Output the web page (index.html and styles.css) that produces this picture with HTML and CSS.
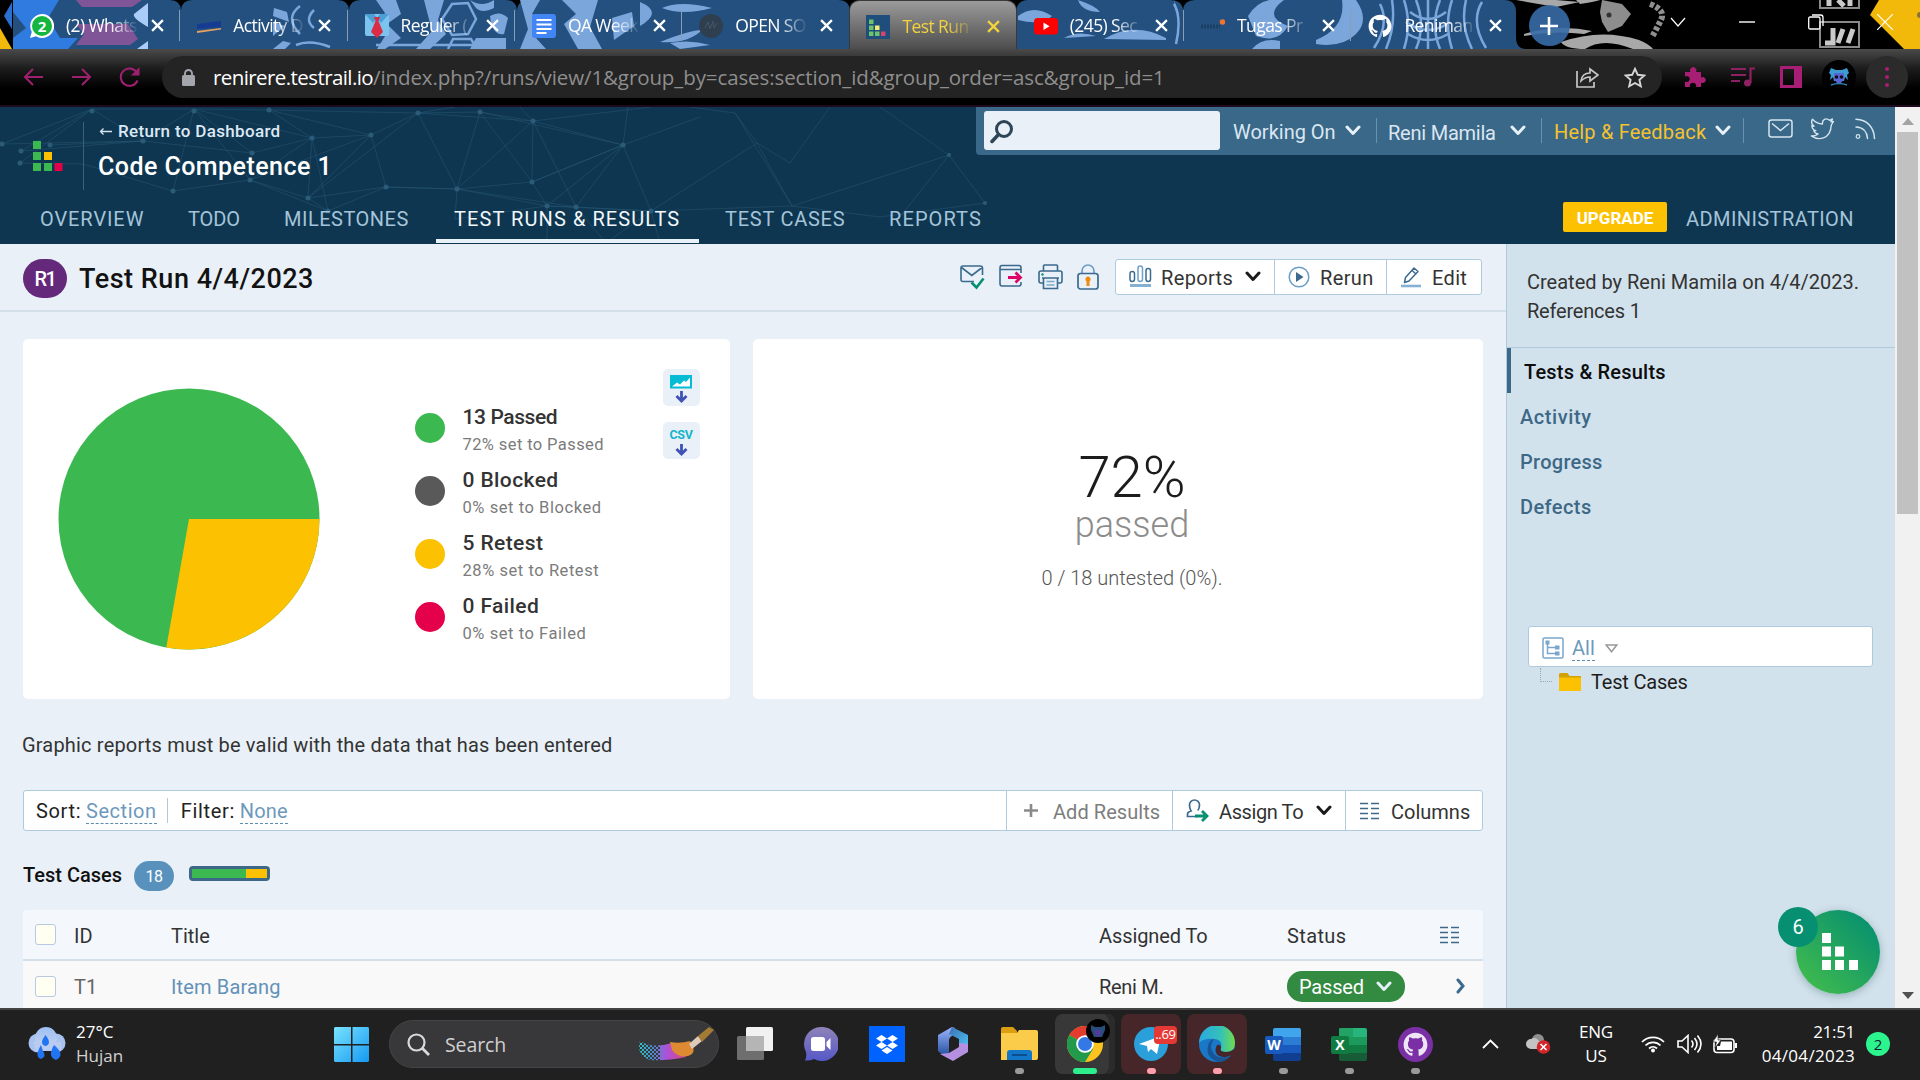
FILE: index.html
```
<!DOCTYPE html>
<html lang="en">
<head>
<meta charset="utf-8">
<title>Test Run 4/4/2023 - TestRail</title>
<link rel="stylesheet" href="styles.css">
</head>
<body>
<svg class="defs" width="0" height="0" aria-hidden="true">
  <symbol id="x" viewBox="0 0 12 12"><path d="M1 1l10 10M11 1L1 11" fill="none" stroke="currentColor" stroke-width="2.1"/></symbol>
  <symbol id="chev" viewBox="0 0 16 11"><path d="M2 2l6 6.5L14 2" fill="none" stroke="currentColor" stroke-width="3" stroke-linecap="round" stroke-linejoin="round"/></symbol>
  <symbol id="cols" viewBox="0 0 20 18"><path d="M0 1.500h8M11 1.500h8M0 6.500h8M11 6.500h8M0 11.500h8M11 11.500h8M0 16.500h8M11 16.500h8" fill="none" stroke="#3d6887" stroke-width="1.700"/></symbol>
  <symbol id="octo" viewBox="0 0 24 24"><path d="M12 .8C5.600.8.6 5.900.6 12.200c0 5 3.200 9.200 7.700 10.700.6.1.8-.2.8-.6v-2.300c-3.200.7-3.800-1.300-3.800-1.300-.5-1.300-1.300-1.700-1.300-1.700-1-.7.1-.7.1-.7 1.200.1 1.800 1.200 1.800 1.200 1 1.700 2.700 1.200 3.300 1 .1-.8.4-1.300.7-1.600-2.500-.3-5.200-1.300-5.200-5.600 0-1.300.4-2.300 1.200-3.100-.1-.3-.5-1.500.1-3.100 0 0 1-.3 3.200 1.200a11 11 0 0 1 5.700 0c2.200-1.500 3.200-1.200 3.200-1.200.6 1.600.2 2.800.1 3.100.7.8 1.200 1.800 1.200 3.100 0 4.400-2.700 5.300-5.200 5.600.4.400.8 1.100.8 2.200v3.200c0 .4.2.7.8.6 4.500-1.500 7.600-5.800 7.600-10.700C23.400 5.900 18.400.8 12 .8z" fill="currentColor"/></symbol>
</svg>
<div class="desktop">

<div class="tabstrip">
  <svg class="art" width="1920" height="49" viewBox="0 0 1920 49">
    <rect width="1920" height="49" fill="#000"/>
    <path d="M0 28L12 49H0z" fill="#f2b90a"/><path d="M4 16L12 2v27z" fill="#2d6fd0"/>
    <path d="M13 49V0H170q10 0 11 10q1-10 11-10H338q10 0 11 10q1-10 11-10H506q10 0 11 10q1-10 11-10H838q12 0 12 12v37zM1016 49V14q0-14 12-14H1170q12 0 13 10q1-10 12-10H1504q12 0 12 12v25q0 12 10 12z" fill="#24507f"/>
    <path d="M13 0H59L48 18 60 38H78L68 49H13V38L26 28 13 12z" fill="#2f7be0"/>
    <path d="M76 0H142L132 7H82zM76 24H128L138 39 130 45H76L84 34z" fill="#7f5597"/>
    <path d="M148 3V27Q132 18 134 14zM137 49L148 41V49z" fill="#a9cdf8"/>
    <g fill="#7ba6dc" stroke="none">
      <path d="M274 8l13 4 2 10-16-6zM273 49l10-8 8 2-6 6zM273 22l12 4-12 10zM376 0h20l5 14-14 10 14 14-16 11h-8l10-16-8-10 6-10zM424 0h20l-6 20 8 14-16 15h-14l16-18zM520 0h20l-8 14 14 8-10 16 10 11h-26l8-20zM562 0l14 14-12 10 14 25h24l-12-22 8-27zM612 18l20-6 2 14-20 14zM640 2q24 10 0 24zM662 8q18-8 50 0q-30 8-50 0zM660 42q30-12 42-12q-14 14-42 12zM670 43q20-4 40 2l-30 4z"/>
      <path d="M470 0q12 8 24 0v8q-12 6-18 0zM490 16q10-6 18 2l-4 16q-12 2-14-18zM476 38h30v11h-36z"/>
      <path d="M1018 16q16-12 34 0q-10 10-34 4zM1078 0q18 6 22 12q-18 0-22-12zM1064 38q14-8 32-2zM1104 39q30-18 62-1v2zM1174 0q8 20 2 12zM1248 16q12-20 36-16q-22 16 4 26q-10 18-32 10zM1252 49q10-12 28-8v8zM1316 40q30-12 26-40h14q14 20 0 34t-40 10z"/>
    </g>
    <g fill="none" stroke="#7ba6dc" stroke-width="2.500">
      <path d="M300 6q-16 12 0 28M314 10q-10 10 0 18M452 4l-10 15 10 16 16-1 8-15-8-16zM448 49l5-10h18l6 10M376 45h118M296 45q14-6 34 2"/>
      <path d="M1174 4q8 14 2 40M1392 0q4 25-6 49M1404 0q8 24 0 49M1416 0q10 25 0 49M1428 0v49M1440 0q-10 25 0 49M1452 0q-8 24 0 49M1466 0q-6 25 6 49M1380 4q10 20-6 44M1482 2q-12 20 4 46M1410 12q18 14 36 0M1406 22q22 16 44 0M1408 34q20 12 40 0"/>
    </g>
    <path d="M1516 0h40l24 2-24 5zM1580 4q14-2 20-4h-24zM1561 42q40-14 78-2q10 4 14 9h-20q-30-12-48 0q-20 0-24-7zM1524 34q34-10 68-3l-8 3q-30-4-60 2z" fill="#a8a8a8"/>
    <path d="M1600 12l2-12 20 4 9 10-9 12-14 6-6-10z" fill="#8d8d8d"/><circle cx="1609" cy="15" r="2.500" fill="#333"/>
    <path d="M1650 4q16 6 11 16t-9 17" fill="none" stroke="#909090" stroke-width="6" stroke-dasharray="4 2"/>
    <g fill="none" stroke="#8a8a8a" stroke-width="2"><path d="M1820-4v12h39V-4M1820 22h39v25h-39z"/><path d="M1825 43h8V28M1838 43l5-14M1848 43l5-14M1829 6V0M1838 0l6 6M1850 6V0" stroke="#c9c9c9" stroke-width="5"/></g>
    <path d="M1870 15L1879 0h41v49h-16z" fill="#f2b90a"/><circle cx="1920" cy="15" r="3" fill="#8a7330"/>
  </svg>
  <div class="tabs">
    <div class="tab"><svg class="fav" width="24" height="24" viewBox="0 0 24 24"><path d="M12 0a12 12 0 1 1-6 22.300L0 24l1.800-6A12 12 0 0 1 12 0z" fill="#fff"/><circle cx="12" cy="12" r="10" fill="#15b63f"/><text x="12" y="17.500" text-anchor="middle" class="wa">2</text></svg><span class="tt">(2) Whats</span><svg class="cl"><use href="#x"/></svg></div>
    <div class="tab"><svg class="fav" width="24" height="24" viewBox="0 0 24 24"><path d="M0 10l24-3v6L0 15z" fill="#153c92"/><path d="M0 17l24-3v1.500L0 19z" fill="#e5a15f"/></svg><span class="tt">Activity D</span><svg class="cl"><use href="#x"/></svg></div>
    <div class="tab"><svg class="fav" width="24" height="24" viewBox="0 0 24 24"><rect width="24" height="22" rx="2" fill="#7cc4f0"/><path d="M0 0h9l3 4-4 5zM24 0h-9l-3 4 4 5z" fill="#4a9fd6"/><path d="M9 3h6l-1.500 4L18 18l-6 6-6-6 4.500-11z" fill="#dc2b45"/></svg><span class="tt">Reguler (</span><svg class="cl"><use href="#x"/></svg></div>
    <div class="tab"><svg class="fav" width="24" height="24" viewBox="0 0 24 24"><rect width="24" height="24" rx="3" fill="#4285f4"/><path d="M4.500 6h15M4.500 10.500h15M4.500 15h15M4.500 19h10" stroke="#fff" stroke-width="2.200"/></svg><span class="tt">QA Week</span><svg class="cl"><use href="#x"/></svg></div>
    <div class="tab"><svg class="fav" width="24" height="24" viewBox="0 0 24 24"><circle cx="12" cy="12" r="12" fill="#2f3f4f"/><path d="M6 14l3-6 2 7 3-8 1 7 3-5" fill="none" stroke="#46566a"/></svg><span class="tt">OPEN SO</span><svg class="cl"><use href="#x"/></svg></div>
    <div class="tab active"><svg class="fav" width="24" height="24" viewBox="0 0 24 24"><rect width="24" height="24" fill="#1f4d7c"/><path d="M3 4.500h4.500V9H3zM3 10.500h4.500V15H3zM3 16.500h4.500V21H3zM9 16.500h4.500V21H9z" fill="#6cc46b"/><path d="M9 10.500h4.500V15H9z" fill="#f0ec74"/><path d="M15 16.500h4.500V21H15z" fill="#d6456b"/></svg><span class="tt">Test Run</span><svg class="cl"><use href="#x"/></svg></div>
    <div class="tab"><svg class="fav" width="24" height="24" viewBox="0 0 24 24"><rect y="4" width="24" height="16.500" rx="3.500" fill="#f00"/><path d="M9.500 8.500v7.500l6-3.700z" fill="#fff"/></svg><span class="tt">(245) Sec</span><svg class="cl"><use href="#x"/></svg></div>
    <div class="tab"><svg class="fav" width="24" height="24" viewBox="0 0 24 24"><path d="M0 12.500h19" stroke="#1b3e63" stroke-width="4" stroke-dasharray="2 1"/><circle cx="21.500" cy="8" r="2.800" fill="#ee7432"/></svg><span class="tt">Tugas Pr</span><svg class="cl"><use href="#x"/></svg></div>
    <div class="tab last"><svg class="fav white" width="24" height="24"><use href="#octo"/></svg><span class="tt">Reniman</span><svg class="cl"><use href="#x"/></svg></div>
    <div class="newtab"><svg width="18" height="18" viewBox="0 0 18 18"><path d="M9 0v18M0 9h18" stroke="#fff" stroke-width="2.600"/></svg></div>
  </div>
  <div class="winctl">
    <svg width="16" height="10" viewBox="0 0 16 10"><path d="M1 1l7 8 7-8" fill="none" stroke="#fff" stroke-width="1.200"/></svg>
    <svg width="16" height="10" viewBox="0 0 16 10"><path d="M0 5h16" stroke="#fff" stroke-width="1.400"/></svg>
    <svg width="16" height="16" viewBox="0 0 16 16"><path d="M.7 4.500q0-1.500 1.500-1.500h8.300q1.500 0 1.500 1.500v9q0 1.500-1.500 1.500H2.200Q.7 15 .7 13.500zM4 1h8.500Q15 1 15 3.500V12" fill="none" stroke="#fff" stroke-width="1.300"/></svg>
    <svg width="16" height="16" viewBox="0 0 16 16"><path d="M0 0l16 16M16 0L0 16" stroke="#fff" stroke-width="1.200"/></svg>
  </div>
</div>

<div class="toolbar">
  <div class="navbtns">
    <svg width="22" height="20" viewBox="0 0 22 20"><path d="M20 10H3M10 2l-8 8 8 8" fill="none" stroke="#a02070" stroke-width="2"/></svg>
    <svg width="22" height="20" viewBox="0 0 22 20"><path d="M1 10h17M11 2l8 8-8 8" fill="none" stroke="#a02070" stroke-width="2"/></svg>
    <svg width="22" height="20" viewBox="0 0 22 20"><path d="M18.500 13.500A8.700 8.700 0 1 1 17.500 5" fill="none" stroke="#a02070" stroke-width="2"/><path d="M20.500 0v8.500H12z" fill="#a02070"/></svg>
  </div>
  <div class="omnibox">
    <svg class="lock" width="13" height="17" viewBox="0 0 13 17"><rect y="6" width="13" height="11" rx="1.500" fill="#a3a6ad"/><path d="M3 7V4.500a3.500 3.500 0 0 1 7 0V7" fill="none" stroke="#a3a6ad" stroke-width="1.900"/></svg>
    <span class="host">renirere.testrail.io</span><span class="path">/index.php?/runs/view/1&amp;group_by=cases:section_id&amp;group_order=asc&amp;group_id=1</span>
    <svg class="share" width="23" height="22" viewBox="0 0 23 22"><path d="M1 5v16h17v-5M5 15q1-8 9-8V3l8 6-8 6v-4q-5 0-9 4z" fill="none" stroke="#c7c7c7" stroke-width="1.700"/></svg>
    <svg class="star" width="22" height="21" viewBox="0 0 22 21"><path d="M11 1.800l2.800 6 6.500.7-4.900 4.400 1.400 6.400L11 16l-5.800 3.300 1.400-6.400L1.700 8.500l6.500-.7z" fill="none" stroke="#d6d6d6" stroke-width="1.900"/></svg>
  </div>
  <div class="ext">
    <svg width="22" height="22" viewBox="0 0 22 22"><path d="M1 6h5.500a3.200 3.200 0 1 1 5.500 0h5v5.500a3 3 0 1 1 0 5V21h-5a3.200 3.200 0 1 0-6 0H1v-5.500a3 3 0 1 0 0-5z" fill="#a81e74"/></svg>
    <svg width="24" height="20" viewBox="0 0 24 20"><path d="M0 2h15M0 8h15M0 14h9M19.500 16V1.500H24" fill="none" stroke="#8e2163" stroke-width="2.200"/><circle cx="16.500" cy="16" r="3.500" fill="#8e2163"/></svg>
    <svg width="22" height="22" viewBox="0 0 22 22"><path d="M1.500 1.500h19v19h-19z" fill="none" stroke="#a81e74" stroke-width="3"/><path d="M14 1h7v20h-7z" fill="#a81e74"/></svg>
    <svg width="34" height="34" viewBox="0 0 34 34"><circle cx="17" cy="17" r="17" fill="#000"/><path d="M9 8l5 2h6l5-2 2 5-2 2 1 5-3-3-1 4H12l-1-4-3 3 1-5-2-2z" fill="#3a9ccf"/><path d="M12 13h10v6l-3 4h-4l-3-4z" fill="#5a62d8"/><circle cx="14.500" cy="17" r="1.800" fill="#111"/><circle cx="19.500" cy="17" r="1.800" fill="#111"/><path d="M9 25q8-3 16 0" stroke="#2b7fae" stroke-width="1.500" fill="none"/></svg>
    <div class="more"><i></i><i></i><i></i></div>
  </div>
</div>

<div class="viewport">
<div class="app">
  <header class="header">
    <svg class="mesh" width="1000" height="137" viewBox="0 0 1000 137">
      <g fill="none" stroke="#2a5775" stroke-width="1" opacity=".5">
        <path d="M2 37L92 2 21 44M92 2L20 56M92 2L194 2 269 3 312 31 371 28 418 6 480 5 533 14 623 38 651 104 576 100 533 14 457 82 386 80 308 91 250 73 173 84 83 57 20 56M21 44L143 34 2 37M92 2L143 34 194 2 252 46 312 31 250 73M194 2L173 84M194 2L250 73M269 3L418 6 308 91 328 104 386 80 371 28 250 73M312 31L308 91 371 28M312 31L328 104M418 6L457 82 480 5 532 75 533 14M418 6L533 14M480 5L623 38 532 75 457 82 547 99 576 100 623 38 547 99M457 82L576 100M623 38L532 75M547 99L651 104M194 2L312 31M269 3L371 28M533 14L651 0M386 80L457 82 455 112 547 99M328 104L250 73M532 75L547 99 547 136M576 100L606 136 651 104 660 136M455 0L418 6M533 14L520 0M623 38L700 10M623 38L628 0M651 104L757 36 790 56 830 0M757 36L735 6 690 0M651 104L792 99 949 48 985 96 880 110 792 99 757 36M949 48L880 0M949 48L900 110M792 99L735 6M143 34L252 46M50 38L143 34"/>
      </g>
      <g fill="#2c5b79"><circle cx="92" cy="4" r="2.500"/><circle cx="194" cy="4" r="2.500"/><circle cx="269" cy="3" r="2.500"/><circle cx="418" cy="6" r="2.500"/><circle cx="480" cy="5" r="2.500"/><circle cx="533" cy="14" r="2.500"/><circle cx="623" cy="38" r="2.500"/><circle cx="312" cy="31" r="2.500"/><circle cx="371" cy="28" r="2.500"/><circle cx="252" cy="46" r="2.500"/><circle cx="173" cy="84" r="2.500"/><circle cx="250" cy="73" r="2.500"/><circle cx="308" cy="91" r="2.500"/><circle cx="386" cy="80" r="2.500"/><circle cx="457" cy="82" r="2.500"/><circle cx="532" cy="75" r="2.500"/><circle cx="547" cy="99" r="2.500"/><circle cx="576" cy="100" r="2.500"/><circle cx="651" cy="104" r="2.500"/><circle cx="328" cy="104" r="2.500"/><circle cx="21" cy="44" r="2.500"/><circle cx="20" cy="56" r="2.500"/><circle cx="2" cy="37" r="2.500"/><circle cx="50" cy="38" r="2.500"/><circle cx="143" cy="34" r="2.500"/><circle cx="949" cy="48" r="2"/><circle cx="985" cy="96" r="2"/></g>
    </svg>
    <div class="htop">
      <svg class="logo" width="30" height="31" viewBox="0 0 30 31"><path d="M0 0h8v8H0zM0 11h8v8H0zM0 22h8v8H0zM11 22h8v8h-8z" fill="#3cb850"/><path d="M11 11h8v8h-8z" fill="#fcc100"/><path d="M21.500 22h8v8h-8z" fill="#e4004b"/></svg>
      <div class="hsep"></div>
      <div class="titles">
        <div class="back"><svg width="14" height="9" viewBox="0 0 14 9"><path d="M13 4.500H1.500M4.500 1.500l-3 3 3 3" fill="none" stroke="#d5e3ee" stroke-width="1.300"/></svg><span>Return to Dashboard</span></div>
        <div class="proj">Code Competence 1</div>
      </div>
      <div class="topnav">
        <div class="searchbox"><svg width="24" height="25" viewBox="0 0 24 25"><circle cx="14" cy="10" r="7.500" fill="none" stroke="#2b4657" stroke-width="3"/><path d="M8.500 15.500L2 22.500" stroke="#2b4657" stroke-width="3.500" stroke-linecap="round"/></svg></div>
        <span class="ti t1">Working On</span><svg class="chev"><use href="#chev"/></svg><i class="vs"></i>
        <span class="ti t2">Reni Mamila</span><svg class="chev c2"><use href="#chev"/></svg><i class="vs"></i>
        <span class="ti t3">Help &amp; Feedback</span><svg class="chev c3"><use href="#chev"/></svg><i class="vs v3"></i>
        <svg class="mail" width="25" height="19" viewBox="0 0 25 19"><rect x="1" y="1" width="23" height="17" rx="2.500" fill="none" stroke="#d5e5f0" stroke-width="1.500"/><path d="M4 4.500l8.500 7 8.500-7" fill="none" stroke="#d5e5f0" stroke-width="1.500"/></svg>
        <svg class="tw" width="25" height="22" viewBox="0 0 25 22"><path d="M23.500 3.500l-2.600.3L22.500 1l-3 1.300c-3.500-3-7.600-.6-7 3.700C8.500 5.800 5 4 2.500 1.200 1 4 1.800 6.700 4 8.200L1.800 7.700c.2 2.500 1.700 4.200 4 4.900l-2 .2c.8 1.900 2.300 3 4.300 3.200-2 1.500-4 2.200-6.800 2C8 22.500 20.500 22 21.300 7z" fill="none" stroke="#d5e5f0" stroke-width="1.400" stroke-linejoin="round"/></svg>
        <svg class="rss" width="21" height="22" viewBox="0 0 21 22"><path d="M1 1.200C12 1.500 19 9 19.500 20.500M1 9c7 .2 11 5 11.500 11.500" fill="none" stroke="#d5e5f0" stroke-width="1.500" stroke-linecap="round"/><circle cx="3" cy="18.500" r="1.800" fill="none" stroke="#d5e5f0" stroke-width="1.200"/></svg>
      </div>
    </div>
    <nav class="nav">
      <a class="n1">OVERVIEW</a><a class="n2">TODO</a><a class="n3">MILESTONES</a><a class="n4 on">TEST RUNS &amp; RESULTS</a><a class="n5">TEST CASES</a><a class="n6">REPORTS</a>
      <span class="upgrade">UPGRADE</span><a class="n7">ADMINISTRATION</a>
    </nav>
  </header>

  <div class="body">
    <main class="main">
      <div class="titlebar">
        <span class="r1">R1</span><h1>Test Run 4/4/2023</h1>
        <div class="acts">
          <svg width="25" height="26" viewBox="0 0 25 26"><path d="M11 17.500H3q-2 0-2-2V4q0-2 2-2h17q2.500 0 2.500 2v7M1.500 3.500l10.300 8 10.300-8M10 17.500h4" fill="none" stroke="#3b6a8e" stroke-width="1.600"/><path d="M11.500 18.500l5 5 7-9" fill="none" stroke="#069071" stroke-width="2.600"/></svg>
          <svg width="25" height="26" viewBox="0 0 25 26"><path d="M22 9V4q0-2.500-2-2.500H3Q1 1.500 1 4v15.500Q1 22 3 22h17q2 0 2-2.500V18M1 5.500h21" fill="none" stroke="#3b6a8e" stroke-width="1.600"/><path d="M9 13.500h11M16.500 8.500l5 5-5 5" fill="none" stroke="#dc0567" stroke-width="2.800"/></svg>
          <svg width="25" height="26" viewBox="0 0 25 26"><path d="M5.500 7V2q0-1 1-1h12q1 0 1 1v5M5.500 19H3q-2 0-2-2V9q0-2 2-2h19q2 0 2 2v8q0 2-2 2h-2.500M5.500 14h14v10.500h-14zM4 14h17" fill="none" stroke="#3b6a8e" stroke-width="1.600"/><path d="M8.500 17.500h8M8.500 21h8" stroke="#7aa9c8" stroke-width="1.500"/><circle cx="4.500" cy="10.500" r="1.200" fill="#069071"/></svg>
          <svg width="22" height="26" viewBox="0 0 22 26"><path d="M5 10V7a6 6 0 0 1 12 0v3" fill="none" stroke="#6f9fc4" stroke-width="1.700"/><rect x="1" y="9.500" width="20" height="15.500" rx="2.500" fill="none" stroke="#3b6a8e" stroke-width="1.700"/><path d="M11 12.500a2.800 2.800 0 0 1 1.500 5V22h-3v-4.500a2.800 2.800 0 0 1 1.500-5z" fill="#f08a0c"/></svg>
        </div>
        <div class="btns">
          <span class="btn b1"><svg width="23" height="23" viewBox="0 0 23 23"><rect x="1" y="6.500" width="4.500" height="10" rx="2.200" fill="none" stroke="#3b6a8e" stroke-width="1.500"/><rect x="9" y="1" width="4.500" height="15.500" rx="2.200" fill="none" stroke="#6d9fc8" stroke-width="1.500"/><rect x="17" y="3.500" width="4.500" height="13" rx="2.200" fill="none" stroke="#3b6a8e" stroke-width="1.500"/><path d="M1 20.500h21" stroke="#86b0d2" stroke-width="3"/></svg><b>Reports</b><svg class="chev k"><use href="#chev"/></svg></span>
          <span class="btn b2"><svg width="22" height="22" viewBox="0 0 22 22"><circle cx="11" cy="11" r="9.800" fill="none" stroke="#6d9fc4" stroke-width="1.500"/><path d="M8 6l7.500 5L8 16z" fill="#3b6a8e"/></svg><b>Rerun</b></span>
          <span class="btn b3"><svg width="22" height="22" viewBox="0 0 22 22"><path d="M4.500 16.500l1-5L14 2l4 3.500-9 9.500zM12 4.500l4 3.500" fill="none" stroke="#3b6a8e" stroke-width="1.500" stroke-linejoin="round"/><path d="M1 20h20" stroke="#86b0d2" stroke-width="2.600"/></svg><b>Edit</b></span>
        </div>
      </div>

      <div class="cards">
        <section class="card c-left">
          <svg class="pie" width="262" height="262" viewBox="-131 -131 262 262"><circle r="130.500" fill="#3cb850"/><path d="M0 0H130.500A130.500 130.500 0 0 1 -22.700 128.500z" fill="#fcc100"/></svg>
          <div class="legend">
            <div class="li"><i class="dot g"></i><div><div class="l1">13 Passed</div><div class="l2">72% set to Passed</div></div></div>
            <div class="li"><i class="dot b"></i><div><div class="l1 w">0 Blocked</div><div class="l2 v">0% set to Blocked</div></div></div>
            <div class="li"><i class="dot y"></i><div><div class="l1 w">5 Retest</div><div class="l2 v">28% set to Retest</div></div></div>
            <div class="li"><i class="dot r"></i><div><div class="l1 w">0 Failed</div><div class="l2 v">0% set to Failed</div></div></div>
          </div>
          <div class="dl">
            <span class="dlb"><svg width="22" height="14" viewBox="0 0 22 14"><rect width="22" height="13.500" fill="#05bcd4"/><path d="M2 11.500l5-4 3 2 4-4 2 1.500 4-4.500v9z" fill="#fff"/></svg><svg width="13" height="12" viewBox="0 0 13 12"><path d="M6.500 0v9M1.500 5l5 5 5-5" fill="none" stroke="#3f51b5" stroke-width="2.800"/></svg></span>
            <span class="dlb"><em>CSV</em><svg width="13" height="12" viewBox="0 0 13 12"><path d="M6.500 0v9M1.500 5l5 5 5-5" fill="none" stroke="#3f51b5" stroke-width="2.800"/></svg></span>
          </div>
        </section>
        <section class="card c-right">
          <div class="pct">72%</div><div class="psd">passed</div><div class="unt">0 / 18 untested (0%).</div>
        </section>
      </div>

      <p class="desc">Graphic reports must be valid with the data that has been entered</p>

      <div class="bar">
        <span class="s1">Sort:</span><a class="dash a1">Section</a><i class="bs"></i><span class="s2">Filter:</span><a class="dash a2">None</a>
        <div class="bright">
          <span class="btn d1"><svg width="16" height="16" viewBox="0 0 16 16"><path d="M8 1v13M1 7.500h14" stroke="#8a8a8a" stroke-width="2.600"/></svg><b>Add Results</b></span>
          <span class="btn d2"><svg width="23" height="23" viewBox="0 0 23 23"><path d="M12 17.500H1.500V15q0-2 3.500-3Q3.500 9.500 3.500 6a5 5 0 0 1 10 0q0 3.500-1.700 5.500" fill="none" stroke="#3b6a8e" stroke-width="1.700"/><path d="M9 17h11M16 12l5 5-5 5" fill="none" stroke="#069071" stroke-width="2.800"/></svg><b>Assign To</b><svg class="chev k"><use href="#chev"/></svg></span>
          <span class="btn d3"><svg width="20" height="18"><use href="#cols"/></svg><b>Columns</b></span>
        </div>
      </div>

      <div class="sect"><h2>Test Cases</h2><span class="cnt">18</span><span class="prog"><i class="pg"></i><i class="py"></i></span></div>

      <div class="table">
        <div class="tr th"><i class="cb"></i><span>ID</span><span>Title</span><span class="neg">Assigned To</span><span class="pos">Status</span><svg width="20" height="18"><use href="#cols"/></svg></div>
        <div class="tr"><i class="cb"></i><span class="gr">T1</span><a>Item Barang</a><span class="reni">Reni M.</span><span class="pill">Passed<svg class="chev"><use href="#chev"/></svg></span><svg class="go" width="10" height="16" viewBox="0 0 10 16"><path d="M2 2l5 6-5 6" fill="none" stroke="#3b6a8e" stroke-width="3" stroke-linecap="round"/></svg></div>
      </div>
    </main>

    <aside class="side">
      <div class="created"><div>Created by Reni Mamila on 4/4/2023.</div><div class="refs">References 1</div></div>
      <div class="menu"><a class="cur">Tests &amp; Results</a><a class="m2">Activity</a><a class="m3">Progress</a><a class="m4">Defects</a></div>
      <div class="filter"><svg width="22" height="22" viewBox="0 0 22 22"><rect x="1" y="1" width="20" height="20" rx="1.500" fill="#fff" stroke="#7ba6cb" stroke-width="1.500"/><path d="M5.500 6v10.500H14M6 10.500h8" fill="none" stroke="#7ba6cb" stroke-width="1.500"/><path d="M3.500 3.500h4v4h-4zM13 8.500h4.500v4H13zM13 14.500h4.500v4H13z" fill="#7ba6cb"/></svg><a class="dash">All</a><svg width="13" height="9" viewBox="0 0 13 9"><path d="M1.200 1h10.600L6.500 7.800z" fill="none" stroke="#999" stroke-width="1.500"/></svg></div>
      <div class="tree"><i class="elbow"></i><svg width="22" height="18" viewBox="0 0 22 18"><path d="M0 1.500Q0 0 1.500 0h7l2 3H22v13q0 2-1.500 2h-19Q0 18 0 16.500z" fill="#d1a106"/><path d="M0 4.500h22v12q0 1.500-1.500 1.500h-19Q0 18 0 16.500z" fill="#fcc100"/></svg><span>Test Cases</span></div>
    </aside>
  </div>
  <div class="fab"><svg width="38" height="38" viewBox="0 0 38 38"><path d="M1 0h9v10H1zM1 13.500h9v10H1zM14 13.500h9v10h-9zM1 27h9v10H1zM14 27h9v10h-9zM28 27h9v10h-9z" fill="#fff"/></svg><span class="fabn">6</span></div>
</div>
<div class="scroll"><i class="up"></i><i class="thumb"></i><i class="down"></i></div>
</div>

<div class="taskbar">
  <div class="weather"><svg width="38" height="34" viewBox="0 0 38 34"><defs><linearGradient id="cg" x1="0" y1="0" x2="0" y2="1"><stop offset="0" stop-color="#9cc0f4"/><stop offset="1" stop-color="#c9d3ec"/></linearGradient></defs><circle cx="10" cy="16" r="9.500" fill="#a9c3f0"/><circle cx="28" cy="16" r="9.500" fill="#a9c3f0"/><circle cx="18" cy="11" r="11" fill="url(#cg)"/><path d="M5 15h28v9H8z" fill="#b9cbf0"/><path d="M17.500 8q7 9 0 11-7-2 0-11zM13 18q-7 12 0 14 6-3 2-8zM26 18q-7 12 2 15 10-5-2-15z" fill="#2174f3"/></svg><div class="wt"><span>27°C</span><span class="dim">Hujan</span></div></div>
  <svg class="win" width="35" height="35" viewBox="0 0 35 35"><defs><linearGradient id="wg" x1="0" y1="0" x2="1" y2="1"><stop offset="0" stop-color="#79e3fd"/><stop offset="1" stop-color="#1599f3"/></linearGradient></defs><path d="M1 0h16v17H0V1zM18.500 0H34l1 1v16H18.500zM0 18.500h17V35H1l-1-1zM18.500 18.500H35V34l-1 1H18.500z" fill="url(#wg)"/></svg>
  <div class="tsearch"><svg width="23" height="23" viewBox="0 0 23 23"><circle cx="9.500" cy="9.500" r="8" fill="none" stroke="#d9d9d9" stroke-width="2.200"/><path d="M15 15l7 7" stroke="#d9d9d9" stroke-width="2.800"/></svg><span>Search</span>
    <svg class="brush" width="76" height="34" viewBox="0 0 76 34"><defs><linearGradient id="bg1"><stop offset="0" stop-color="#2bc7c7"/><stop offset=".3" stop-color="#4b8bd0"/><stop offset=".6" stop-color="#b04fd8"/><stop offset="1" stop-color="#d8497c"/></linearGradient><pattern id="pk" width="4" height="4" patternUnits="userSpaceOnUse"><path d="M0 0h2v2H0zM2 2h2v2H2z" fill="#38383a"/></pattern></defs><path d="M2 14q12 8 32 2l14 14q-20 4-36 3Q-2 28 2 14z" fill="url(#bg1)"/><path d="M0 12h22v22H0z" fill="url(#pk)"/><path d="M32 15q10 2 20-1 8 12-2 15-10 2-16-6z" fill="#dd8a33"/><path d="M51 17l9-8 4 5-10 8z" fill="#dccabb"/><path d="M60 9l11-9 5 3-12 12z" fill="#a37b35"/></svg></div>
  <div class="apps">
    <div class="ap"><svg width="36" height="34" viewBox="0 0 36 34"><rect x="9" width="27" height="24" rx="1.500" fill="#f1f1f1"/><rect y="9" width="27" height="24" rx="1.500" fill="#6e6e6e"/><path d="M9 9h18v15H9z" fill="#b5b5b5"/></svg></div>
    <div class="ap"><svg width="34" height="34" viewBox="0 0 34 34"><defs><linearGradient id="tg" x1="0" y1="0" x2="0" y2="1"><stop offset="0" stop-color="#8f83b8"/><stop offset="1" stop-color="#5558c8"/></linearGradient></defs><path d="M17 0a17 17 0 1 1-7 32q-4 2-9 1.500Q3 29 2 25A17 17 0 0 1 17 0z" fill="url(#tg)"/><rect x="7" y="10" width="14" height="14" rx="2.500" fill="#fff"/><path d="M22.500 15l4-4v12l-4-4z" fill="#fff"/></svg></div>
    <div class="ap"><svg width="36" height="36" viewBox="0 0 36 36"><path d="M0 0h36v36H0z" fill="#0062ff"/><path d="M12.500 9l5.500 3.500-5.500 3.500L7 12.500zM23.500 9l5.500 3.500-5.500 3.500-5.500-3.500zM12.500 16l5.500 3.500-5.500 3.500L7 19.500zM23.500 16l5.500 3.500-5.500 3.500-5.500-3.500zM18 21l5.500 3.500L18 28l-5.500-3.500z" fill="#fff"/></svg></div>
    <div class="ap"><svg width="34" height="34" viewBox="0 0 34 34"><defs><linearGradient id="m1" x1="0" y1="0" x2="0" y2="1"><stop offset="0" stop-color="#9db4ff"/><stop offset="1" stop-color="#23509e"/></linearGradient><linearGradient id="m2" x1="0" y1="0" x2="1" y2="1"><stop offset="0" stop-color="#3a6fb4"/><stop offset="1" stop-color="#4ec3f3"/></linearGradient></defs><path d="M16 0L2 8v16l6 5 5-3V13q0-3 6-6V1z" fill="url(#m1)"/><path d="M16 0l16 8v13l-9-4v-5l-10-5z" fill="url(#m2)"/><path d="M32 17v8L17 34 4 27l9-1 10-6v-4z" fill="#b58fe0"/></svg></div>
    <div class="ap"><svg width="37" height="34" viewBox="0 0 37 34"><path d="M0 2q0-2 2-2h10l4 4v5H0z" fill="#dc9f10"/><path d="M0 6h16l2-3h17q2 0 2 2v26q0 2-2 2H0z" fill="#fbcb4a"/><path d="M6 33v-7q0-3 3-3h19q3 0 3 3v7z" fill="#1277c9"/><path d="M11 28h15" stroke="#0c4d8a" stroke-width="2"/></svg><i class="run"></i></div>
    <div class="ap tile chrome"><svg width="36" height="36" viewBox="0 0 36 36"><circle cx="18" cy="18" r="18" fill="#fcc31e"/><path d="M18 18L2.400 9A18 18 0 0 1 33.600 9z" fill="#e33b2e"/><path d="M18 18L2.400 9A18 18 0 0 0 18 36l8-13z" fill="#219a4b"/><circle cx="18" cy="18" r="8.800" fill="#fff"/><circle cx="18" cy="18" r="7" fill="#3478e5"/></svg><span class="ava"><svg width="24" height="24" viewBox="0 0 24 24"><circle cx="12" cy="12" r="12" fill="#000"/><path d="M5 6l4 2h6l4-2v5l-3 7H8l-3-7z" fill="#274d7b"/><path d="M9 11h6v4l-3 3-3-3z" fill="#53379b"/></svg></span><i class="run on"></i></div>
    <div class="ap tile red"><svg width="34" height="34" viewBox="0 0 34 34"><circle cx="17" cy="17" r="17" fill="#2b9fd9"/><path d="M5 17l22-8-4 18-6-5-3 3-1-6z" fill="#fff"/></svg><span class="n69">..69</span><i class="run pink"></i></div>
    <div class="ap tile red"><svg width="36" height="36" viewBox="0 0 36 36"><defs><linearGradient id="e1" x1="0" y1="0" x2="1" y2="0"><stop offset="0" stop-color="#2aa9e0"/><stop offset=".6" stop-color="#35c1b9"/><stop offset="1" stop-color="#6fdc4a"/></linearGradient></defs><circle cx="18" cy="18" r="18" fill="#1a78c8"/><path d="M0 17A18 18 0 0 1 36 17q0 9-9 9-7 0-5-4 2-8-6-9Q5 12 0 17z" fill="url(#e1)"/><path d="M15 13q-6 8 0 15 6 6 16 2l2-2q-5 7-13 8Q6 32 9 20q1-6 6-7z" fill="#175596"/><path d="M22 22q-2 4 5 4 5 0 8-3v3l-1 2q-6 5-14 2-6-4-2-11 4-1 4 3z" fill="#462628"/></svg><i class="run pink"></i></div>
    <div class="ap"><svg width="36" height="33" viewBox="0 0 36 33"><path d="M8 2q0-2 2-2h24q2 0 2 2v7H8z" fill="#41a5ee"/><path d="M8 9h28v8H8z" fill="#2b7cd3"/><path d="M8 17h28v8H8z" fill="#185abd"/><path d="M8 25h28v6q0 2-2 2H10q-2 0-2-2z" fill="#103f91"/><rect y="8" width="18" height="18" rx="2" fill="#185abd"/><text x="9" y="22" text-anchor="middle" class="ol">W</text></svg><i class="run"></i></div>
    <div class="ap"><svg width="36" height="33" viewBox="0 0 36 33"><path d="M8 2q0-2 2-2h24q2 0 2 2v7H8z" fill="#27b57b"/><path d="M8 2q0-2 2-2h12v9H8z" fill="#21a366"/><path d="M8 9h28v8H8z" fill="#1b9a5c"/><path d="M8 17h28v8H8z" fill="#107c41"/><path d="M8 25h28v6q0 2-2 2H10q-2 0-2-2z" fill="#185c37"/><rect y="8" width="18" height="18" rx="2" fill="#107c41"/><text x="9" y="22" text-anchor="middle" class="ol">X</text></svg><i class="run"></i></div>
    <div class="ap gh"><span><svg width="25" height="25"><use href="#octo"/></svg></span><i class="run"></i></div>
  </div>
  <div class="tray">
    <svg class="y1" width="17" height="10" viewBox="0 0 17 10"><path d="M1 9l7.500-7.500L16 9" fill="none" stroke="#fff" stroke-width="1.800"/></svg>
    <svg class="y2" width="25" height="20" viewBox="0 0 25 20"><circle cx="12" cy="6" r="6" fill="#8f8f8f"/><path d="M5 15a5 5 0 0 1 0-10q5-3 8 2 4 1 5 8z" fill="#c4c4c4"/><circle cx="17.500" cy="13" r="6.800" fill="#d3262b"/><path d="M14.500 10l6 6M20.500 10l-6 6" stroke="#fff" stroke-width="1.600"/></svg>
    <div class="lang"><span>ENG</span><span>US</span></div>
    <svg class="y3" width="24" height="18" viewBox="0 0 24 18"><path d="M1 7a15.500 15.500 0 0 1 22 0M4.500 10.500a10.500 10.500 0 0 1 15 0M8 13.500a6 6 0 0 1 8 0" fill="none" stroke="#fff" stroke-width="1.700"/><circle cx="12" cy="15.500" r="2" fill="#fff"/></svg>
    <svg class="y4" width="25" height="20" viewBox="0 0 25 20"><path d="M1 7h4l6-5.500v17L5 13H1zM14.500 6.500q3 3.500 0 7M17.500 4q5 6 0 12M20.500 1.500q7 8.500 0 17" fill="none" stroke="#fff" stroke-width="1.600"/></svg>
    <svg class="y5" width="25" height="20" viewBox="0 0 25 20"><rect x="1" y="5" width="20" height="13.500" rx="3" fill="none" stroke="#fff" stroke-width="1.600"/><path d="M8 7.500h11v8.500H4v-4h3z" fill="#fff"/><path d="M22 9h2v5h-2z" fill="#fff"/><path d="M5 0L0 8h3.500L2 14l6-8H5z" fill="#fff" stroke="#202020" stroke-width=".6"/></svg>
    <div class="clock"><span>21:51</span><span class="date">04/04/2023</span></div>
    <span class="two">2</span>
  </div>
</div>
</div>
</body>
</html>
```
FILE: styles.css
```
* { box-sizing: border-box; }
body { margin: 0; background: #000; font-family: Roboto, "Liberation Sans", sans-serif; font-size: 20px; color: #333; }
i, em, b { font-style: normal; font-weight: 400; }
svg { flex: none; display: block; }
.defs { position: absolute; }
.desktop { width: 1920px; height: 1080px; display: flex; flex-direction: column; overflow: hidden; }

/* browser tabs */
.tabstrip { position: relative; height: 49px; display: flex; justify-content: space-between; font-family: "Open Sans", sans-serif; }
.art { position: absolute; left: 0; top: 0; }
.tabs { position: relative; display: flex; padding-left: 13px; }
.tab { width: 167.300px; height: 49px; padding: 0 0 0 17px; display: flex; align-items: center; gap: 12px; color: #fff; border-right: 1px solid transparent; border-image: linear-gradient(transparent 11px, #8d9db0 11px, #8d9db0 40px, transparent 40px) 1; }
.tab:nth-child(5), .tab.active, .tab.last { border-image: none; }
.tab.active { background: linear-gradient(#9b9b9b, #4d4d4d); color: #f3d23c; border-radius: 10px 10px 0 0; border: 1px solid #3a3a3a; border-bottom: 0; padding-left: 16px; }
.fav { margin-top: 3px; }
.fav.white { color: #fff; }
.wa { font: 700 15px "Open Sans", sans-serif; fill: #fff; }
.tt { width: 73px; font-size: 17.500px; letter-spacing: -.6px; white-space: nowrap; overflow: hidden; margin-top: 1px; -webkit-mask-image: linear-gradient(90deg, #000 60%, transparent); mask-image: linear-gradient(90deg, #000 60%, transparent); }
.cl { width: 13px; height: 13px; margin: 2px 0 0 0; }
.newtab { width: 41px; height: 41px; border-radius: 50%; background: rgba(54, 107, 167, .9); margin: 5px 0 0 10px; display: flex; align-items: center; justify-content: center; }
.winctl { position: relative; display: flex; gap: 53px; align-items: center; padding: 0 27px 5px 0; }

.toolbar { height: 58px; display: flex; align-items: center; background: linear-gradient(#4a4a4a, #1c1c1c 35%, #000 70%); border-bottom: 2px solid #1d0a1c; }
.navbtns { display: flex; gap: 26px; padding-left: 23px; width: 162px; }
.omnibox { width: 1500px; height: 42px; border-radius: 21px; background: #242424; display: flex; align-items: center; padding-left: 20px; font-family: "Open Sans", sans-serif; font-size: 20.500px; }
.host { color: #fff; margin-left: 18px; width: 160px; white-space: nowrap; letter-spacing: -.58px; }
.path { color: #8e8e8e; width: 1203px; white-space: nowrap; letter-spacing: -.1px; }
.share { margin-right: 25px; }
.ext { display: flex; align-items: center; padding-left: 22px; }
.ext svg:nth-child(2) { margin-left: 25px; }
.ext svg:nth-child(3) { margin-left: 25px; }
.ext svg:nth-child(4) { margin-left: 20px; }
.more { margin-left: 10px; width: 42px; height: 42px; border-radius: 50%; background: #2b2b2b; display: flex; flex-direction: column; align-items: center; justify-content: center; gap: 4px; }
.more i { width: 4px; height: 4px; border-radius: 50%; background: #a81e74; }

/* page */
.viewport { height: 901px; display: flex; overflow: hidden; background: #f1f1f1; }
.app { position: relative; width: 1895px; overflow: hidden; }
.header { position: relative; height: 137px; background: #0e3650; overflow: hidden; }
.mesh { position: absolute; left: 0; top: 0; }
.htop { position: relative; height: 83px; display: flex; }
.logo { margin: 34px 0 0 33px; }
.hsep { width: 1px; height: 68px; background: #34637f; margin: 15px 0 0 20px; }
.titles { margin-left: 15px; padding-top: 14px; width: 877px; }
.back { display: flex; align-items: center; gap: 5px; font-size: 17px; line-height: 20px; font-weight: 500; color: #dde8f5; letter-spacing: .33px; }
.proj { font-size: 25px; line-height: 30px; font-weight: 500; color: #fff; letter-spacing: .45px; margin: 11px 0 0 -1px; }
.topnav { height: 48px; width: 919px; background: #396888; display: flex; align-items: center; padding: 0 0 1px 8px; border-radius: 0 0 0 4px; }
.searchbox { width: 236px; height: 39px; background: #e9f0f7; border-radius: 3px; padding: 8px 0 0 6px; margin-top: -1px; }
.ti { color: #dbe6f2; white-space: nowrap; }
.t1 { margin-left: 13px; width: 112px; padding-top: 2px; }
.t2 { margin-left: 11px; width: 122px; letter-spacing: -.23px; padding-top: 4px; }
.t3 { margin-left: 12px; width: 161px; letter-spacing: .19px; color: #f5c22f; padding-top: 2px; }
.chev { width: 16px; height: 11px; color: #e6f0f8; }
.chev.k { color: #1b1b1b; }
.vs { width: 1px; height: 25px; background: #6592b0; margin-left: 15px; }
.vs.v3 { margin-left: 12px; }
.mail { margin: -5px 0 0 24px; }
.tw { margin: -4px 0 0 17px; }
.rss { margin: -3px 0 0 20px; }
.nav { position: relative; height: 54px; display: flex; padding-left: 40px; color: #a4c4da; line-height: 59px; }
.nav a { white-space: nowrap; height: 53px; }
.n1 { width: 148px; letter-spacing: .9px; } .n2 { width: 96px; letter-spacing: -.1px; } .n3 { width: 152px; letter-spacing: .5px; }
.n4 { width: 263px; letter-spacing: 1.080px; padding-left: 18px; } .n5 { width: 164px; margin-left: 26px; letter-spacing: .75px; } .n6 { width: 674px; letter-spacing: 1.100px; }
.n7 { letter-spacing: .42px; margin-left: 19px; }
.nav .on { color: #f2f7fb; border-bottom: 4px solid #eaf2f9; }
.upgrade { width: 104px; height: 30px; margin-top: 12px; background: #fcc100; border-radius: 2px; color: #fff; font-size: 17px; font-weight: 700; line-height: 32px; text-align: center; }

.body { display: flex; height: 764px; }
.main { width: 1506px; background: #e9f0f7; }
.titlebar { height: 68px; border-bottom: 2px solid #d3dfe9; display: flex; align-items: center; padding: 0 0 0 23px; }
.r1 { width: 44px; height: 39px; border-radius: 20px; background: #64297b; color: #fff; font-weight: 500; font-size: 20px; letter-spacing: -1.500px; text-align: center; line-height: 41px; margin-top: 2px; }
h1 { margin: 4px 0 0 12px; font-size: 27px; font-weight: 500; letter-spacing: .52px; width: 881px; color: #121212; }
.acts { display: flex; gap: 14px; }
.btns { display: flex; height: 36px; width: 367px; margin: -1px 0 0 16px; background: #fff; border: 1px solid #aecadf; border-radius: 3px; }
.btn { display: flex; align-items: center; white-space: nowrap; }
.btn b { padding-top: 2px; }
.btn + .btn { border-left: 1px solid #aecadf; }
.b1 { width: 158px; padding-left: 13px; letter-spacing: .35px; } .b1 b { width: 84px; margin-left: 9px; }
.b2 { width: 112px; padding-left: 13px; letter-spacing: .35px; } .b2 b { margin-left: 10px; }
.b3 { padding-left: 13px; letter-spacing: .35px; } .b3 b { margin-left: 10px; }

.cards { display: flex; gap: 23px; padding: 27px 0 0 23px; }
.card { height: 360px; background: #fff; border-radius: 5px; }
.c-left { width: 707px; display: flex; }
.pie { margin: 49px 0 0 34.500px; }
.legend { margin-left: 95px; width: 249px; padding-top: 65px; }
.li { display: flex; gap: 18px; height: 63px; }
.dot { width: 30px; height: 30px; border-radius: 50%; margin: 9px 0 0; flex: none; }
.g { background: #3cb850; } .b { background: #595959; } .y { background: #fcc100; } .r { background: #e4004b; }
.l1 { font-size: 21px; font-weight: 500; line-height: 26px; letter-spacing: -.4px; white-space: nowrap; }
.l1.w { letter-spacing: .4px; }
.l2 { font-size: 16.500px; line-height: 30px; letter-spacing: .4px; color: #7b7b7b; white-space: nowrap; }
.l2.v { letter-spacing: .56px; }
.dl { padding-top: 30px; margin-left: -1px; }
.dlb { width: 37px; height: 37px; background: #e9f0f7; border-radius: 5px; display: flex; flex-direction: column; align-items: center; gap: 2px; padding-top: 6px; margin-bottom: 16px; }
.dlb em { font: 700 12.500px/14px Roboto, sans-serif; color: #12b5cb; letter-spacing: -.3px; }
.c-right { width: 730px; display: flex; flex-direction: column; align-items: center; padding-left: 28px; }
.pct { font-size: 58px; font-weight: 300; line-height: 58px; margin-top: 109px; color: #1c1c1c; }
.psd { font-size: 36px; font-weight: 300; line-height: 38px; color: #8c8c8c; }
.unt { line-height: 24px; margin-top: 22px; color: #555; font-weight: 300; }
.desc { margin: 34px 0 0 22px; line-height: 24px; letter-spacing: .18px; white-space: nowrap; }
.bar { margin: 33px 0 0 23px; width: 1460px; height: 41px; background: #fff; border: 1px solid #aecadf; border-radius: 3px; display: flex; align-items: center; padding: 0 0 0 12px; }
.bar > span, .bar > a { padding-top: 1px; color: #222; }
.s1 { letter-spacing: .65px; width: 50px; }
.s2 { letter-spacing: .7px; width: 59px; margin-left: 13px; }
.bar .dash, .dash { color: #6d99bd; border-bottom: 1px dashed #5d8cad; line-height: 24px; }
.a1 { letter-spacing: .55px; } .a2 { letter-spacing: .23px; }
.bs { width: 1px; height: 25px; background: #aecadf; margin-left: 10px; }
.bright { display: flex; height: 39px; margin-left: auto; border-left: 1px solid #aecadf; width: 476px; }
.d1 { width: 165px; padding-left: 16px; color: #7d7d7d; } .d1 b { margin-left: 14px; letter-spacing: .05px; }
.d2 { width: 173px; padding-left: 13px; letter-spacing: -.4px; } .d2 b { width: 97px; margin-left: 10px; }
.d3 { padding-left: 14px; } .d3 b { margin-left: 11px; }
.sect { display: flex; align-items: center; height: 32px; margin: 28px 0 0 23px; }
h2 { margin: 0; font-size: 20px; font-weight: 500; width: 111px; color: #111; }
.cnt { width: 40px; height: 30px; border-radius: 15px; background: #5892bc; color: #fff; font-size: 16px; letter-spacing: -.5px; text-align: center; line-height: 31px; margin-top: 1px; }
.prog { display: flex; width: 81px; height: 15px; margin: -3px 0 0 15px; border: 3px solid #3d6887; border-radius: 4px; }
.pg { flex: 13; background: #3cb850; } .py { flex: 5; background: #fcc100; }
.table { margin: 19px 0 0 23px; width: 1460px; }
.tr { display: grid; grid-template-columns: 39px 97px 928px 188px 153px 30px; padding-left: 12px; height: 50px; align-items: center; background: #f9f9f9; }
.tr span, .tr a { padding-top: 1px; }
.th { background: #f4f8fd; border-bottom: 2px solid #d3dfe9; height: 51px; border-radius: 4px 4px 0 0; }
.th span { padding-top: 2px; }
.cb { width: 21px; height: 21px; border: 1px solid #bac9e2; border-radius: 3px; background: #fffff2; }
.neg { letter-spacing: -.1px; } .pos { letter-spacing: .36px; } .gr { color: #666; } .tr a { color: #6391b8; letter-spacing: .15px; } .reni { letter-spacing: -.3px; }
.tr .pill { width: 118px; height: 31px; border-radius: 15px; background: #338a41; color: #fff; display: flex; align-items: center; padding: 1px 0 0 12px; letter-spacing: -.18px; gap: 12px; }
.go { margin-left: 16px; }

.side { width: 389px; background: #d2e2ec; border-left: 1px solid #aecadf; }
.created { height: 104px; border-bottom: 1px solid #aecadf; padding: 24px 0 0 20px; line-height: 29px; }
.refs { letter-spacing: -.2px; }
.menu { height: 278px; }
.menu a { display: block; height: 45px; line-height: 48px; padding-left: 13px; font-weight: 500; color: #3d6887; }
.menu .cur { color: #0d0d0d; border-left: 4px solid #3d6887; letter-spacing: .2px; }
.menu .m2 { letter-spacing: .58px; } .menu .m3 { letter-spacing: .28px; } .menu .m4 { letter-spacing: .42px; }
.filter { width: 345px; height: 41px; margin-left: 21px; background: #fff; border: 1px solid #aecadf; border-radius: 3px; display: flex; align-items: center; padding: 3px 0 0 13px; gap: 9px; }
.filter .dash { margin-left: -1px; }
.filter .dash + svg { margin-left: 1px; }
.tree { display: flex; align-items: center; height: 29px; padding-left: 33px; color: #1d1d1d; }
.elbow { width: 12px; height: 14px; border-left: 1px dotted #8fa9bd; border-bottom: 1px dotted #8fa9bd; margin: -13px 7px 0 0; }
.tree span { margin-left: 10px; letter-spacing: -.2px; }
.fab { position: absolute; left: 1796px; top: 803px; width: 84px; height: 84px; border-radius: 50%; background: linear-gradient(45deg, #3cb850 15%, #07906f 90%); box-shadow: 0 2px 8px rgba(0, 60, 60, .3); display: flex; align-items: center; justify-content: center; padding-left: 3px; }
.fabn { position: absolute; left: -18px; top: -3px; width: 40px; height: 40px; border-radius: 50%; background: #069071; color: #fff; text-align: center; line-height: 40px; }
.scroll { width: 25px; display: flex; flex-direction: column; align-items: center; background: #f1f1f1; }
.up { margin-top: 11px; border: 6px solid transparent; border-top: 0; border-bottom: 7px solid #a3a3a3; }
.thumb { width: 21px; height: 382px; background: #c1c1c1; margin-top: 7px; }
.down { margin: auto 0 9px; border: 6px solid transparent; border-bottom: 0; border-top: 7px solid #505050; }

/* taskbar */
.taskbar { height: 72px; background: #202020; border-top: 2px solid #444; padding-bottom: 2px; display: flex; align-items: center; font-family: "Open Sans", sans-serif; font-size: 17px; color: #fff; }
.weather { display: flex; align-items: center; gap: 10px; width: 306px; padding: 0 0 0 28px; }
.wt, .lang, .clock { display: flex; flex-direction: column; line-height: 24px; }
.dim { color: #d0d0d0; }
.tsearch { display: flex; align-items: center; width: 330px; height: 48px; margin-left: 20px; border-radius: 24px; background: #38383a; border: 1px solid #444; padding-left: 17px; font-size: 19.500px; letter-spacing: -.1px; color: #d0d0d0; }
.win { margin-left: 28px; }
.tsearch span { margin-left: 15px; width: 193px; }
.apps { display: flex; margin-left: 3px; }
.ap { position: relative; width: 66px; height: 60px; display: flex; align-items: center; justify-content: center; border: solid transparent; border-width: 0 3px; background-clip: padding-box; border-radius: 9px; }
.red { background-color: #462628; }
.chrome { background-color: #383838; box-shadow: inset -6px 0 0 #2b2b2b; }
.run { position: absolute; bottom: 0; width: 9px; height: 6px; border-radius: 3px; background: #9a9a9a; }
.run.on { width: 24px; background: #2dee8d; } .run.pink { background: #ff9fac; }
.ava { position: absolute; left: 31px; top: 5px; }
.n69 { position: absolute; left: 33px; top: 12px; width: 23px; height: 18px; background: #e53935; border-radius: 4px; font-size: 13px; line-height: 17px; text-align: center; letter-spacing: -.3px; }
.ol { font: 700 14px "Open Sans", sans-serif; fill: #fff; }
.gh span { width: 35px; height: 35px; border-radius: 50%; background: #7b2fa5; color: #efe6f5; display: flex; align-items: center; justify-content: center; }
.tray { display: flex; align-items: center; margin-left: 34px; }
.y2 { margin-left: 27px; }
.lang { margin-left: 27px; width: 36px; align-items: center; letter-spacing: -.2px; }
.y3 { margin-left: 27px; } .y4 { margin-left: 12px; } .y5 { margin-left: 11px; }
.clock { width: 117px; align-items: flex-end; }
.clock span { letter-spacing: -.3px; }
.clock .date { letter-spacing: .3px; }
.two { width: 24px; height: 24px; border-radius: 50%; background: #2cf58d; color: #123; margin-left: 11px; font-size: 15px; line-height: 24px; text-align: center; }
```
